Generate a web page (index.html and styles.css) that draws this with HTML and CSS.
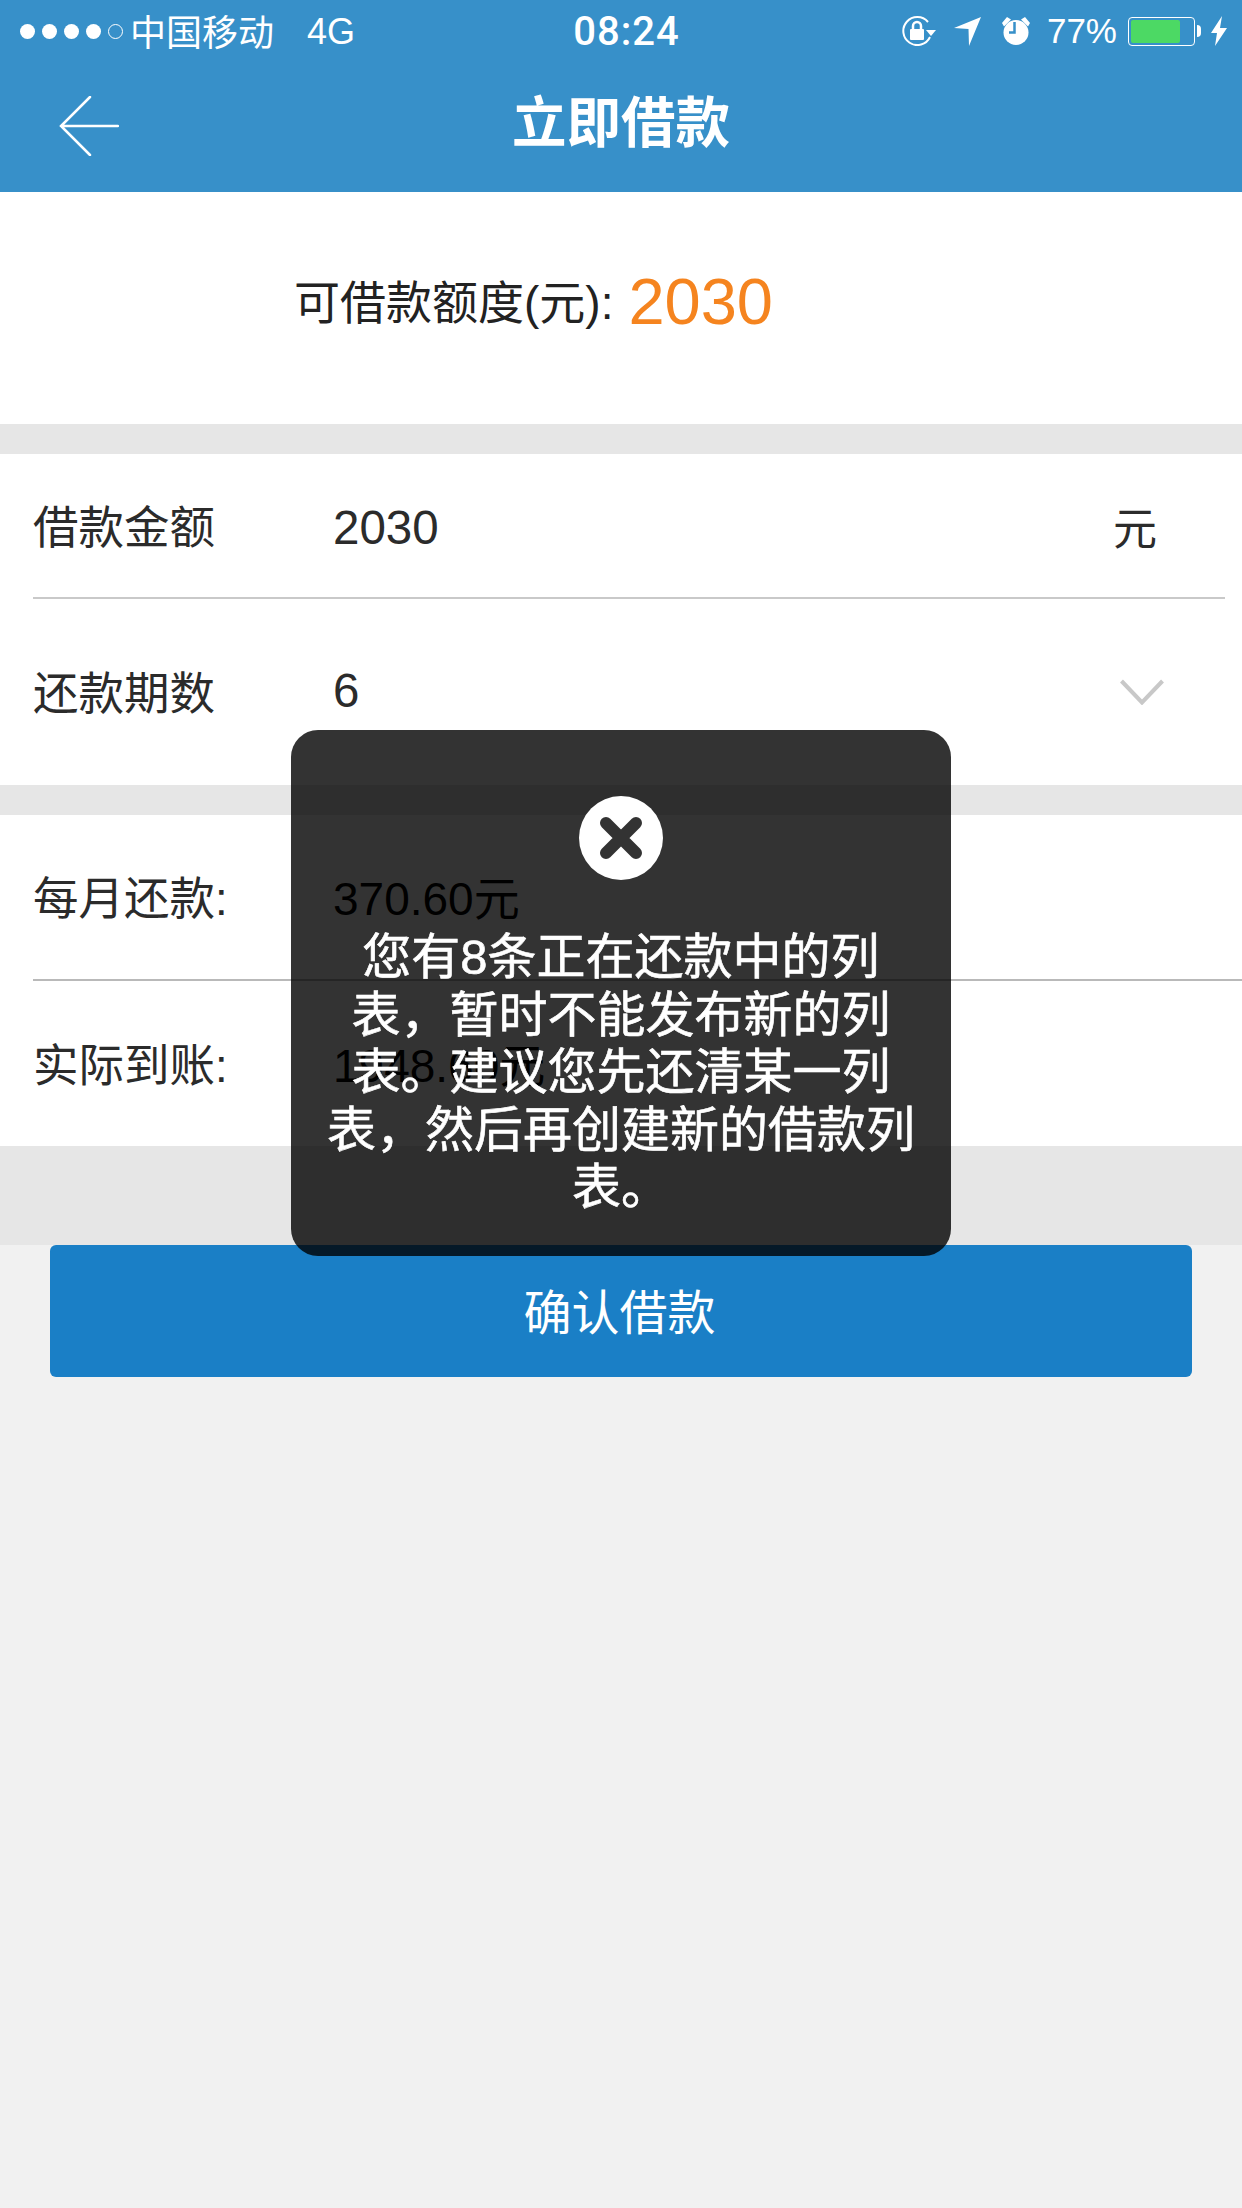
FILE: index.html
```html
<!DOCTYPE html>
<html lang="zh">
<head>
<meta charset="utf-8">
<title>立即借款</title>
<link rel="stylesheet" href="styles.css">
</head>
<body>
<div class="app">
  <header class="header">
    <div class="status">
      <div class="status-left">
        <span class="signal"><i></i><i></i><i></i><i></i><i class="off"></i></span>
        <span class="carrier">中国移动</span>
        <span class="net">4G</span>
      </div>
      <div class="time">08:24</div>
      <div class="status-right">
        <svg class="i-lock" viewBox="0 0 34 30" width="34" height="30"><path d="M26 6A14 14 0 1 0 28 21" fill="none" stroke="#fff" stroke-width="2"/><path d="M24 14h10l-5 6z" fill="#fff"/><rect x="8" y="13" width="14" height="11" rx="1" fill="#fff"/><path d="M11 13V10a4 4 0 0 1 8 0v3" fill="none" stroke="#fff" stroke-width="2.500"/></svg>
        <svg class="i-loc" viewBox="0 0 27 29" width="27" height="29"><path d="M0 11L27 0 15 29 14.500 12z" fill="#fff"/></svg>
        <svg class="i-alarm" viewBox="0 0 30 28" width="30" height="28"><circle cx="15" cy="15.500" r="12.500" fill="#fff"/><path d="M1 6L6 0l4 2.500-7 7zM29 6l-5-6-4 2.500 7 7z" fill="#fff"/><path d="M13.500 5v10.500H8" fill="none" stroke="#3790c9" stroke-width="2.500"/></svg>
        <span class="pct">77%</span>
        <span class="battery"><span class="battery-fill"></span></span>
        <span class="nub"></span>
        <svg class="i-bolt" viewBox="0 0 16 30" width="16" height="30"><path d="M11 0L0 17h6L4 30 16 12H9z" fill="#fff"/></svg>
      </div>
    </div>
    <div class="nav">
      <svg class="back" viewBox="0 0 60 60" width="60" height="60"><path d="M31 1L2 30l29 29M2 30h57" fill="none" stroke="#fff" stroke-width="2.500" stroke-linecap="round"/></svg>
      <h1 class="title">立即借款</h1>
    </div>
  </header>

  <section class="quota">
    <span class="quota-label">可借款额度(元):</span>
    <span class="quota-value">2030</span>
  </section>

  <section class="group group-a">
    <div class="row row-amount">
      <span class="label">借款金额</span>
      <span class="value">2030</span>
      <span class="unit">元</span>
    </div>
    <div class="row row-term">
      <span class="label">还款期数</span>
      <span class="value">6</span>
      <svg class="chev" viewBox="0 0 44 26" width="44" height="26"><path d="M1.500 2L22 23.500 42.500 2" fill="none" stroke="#c8c8c8" stroke-width="4"/></svg>
    </div>
  </section>

  <section class="group group-b">
    <div class="row row-sum">
      <span class="label">每月还款:</span>
      <span class="value dark">370.60元</span>
    </div>
    <div class="row row-sum last">
      <span class="label">实际到账:</span>
      <span class="value dark">1948.60元</span>
    </div>
  </section>

  <button class="confirm" type="button">确认借款</button>

  <div class="toast">
    <span class="close"><svg viewBox="0 0 44 44" width="44" height="44"><path d="M7 7l30 30M37 7L7 37" fill="none" stroke="#333" stroke-width="12" stroke-linecap="round"/></svg></span>
    <p class="toast-text">您有8条正在还款中的列表，暂时不能发布新的列表。建议您先还清某一列表，然后再创建新的借款列表。</p>
  </div>
</div>
</body>
</html>
```

FILE: styles.css
```css
* { box-sizing: border-box; }
html, body { margin: 0; padding: 0; }
body {
  width: 1242px;
  height: 2208px;
  overflow: hidden;
  background: #f1f1f1;
  font-family: "Liberation Sans", "Noto Sans CJK SC", sans-serif;
  color: #2b2b2b;
}
.app { position: relative; width: 1242px; height: 2208px; background: #f1f1f1; }

.header { height: 192px; background: #3790c9; color: #fff; }
.status {
  height: 60px;
  padding: 2px 15px 0 20px;
  display: grid;
  grid-template-columns: 1fr auto 1fr;
  align-items: center;
}
.status-left { display: flex; align-items: center; }
.signal { display: flex; gap: 7px; margin-right: 7px; }
.signal i { width: 15px; height: 15px; border-radius: 50%; background: #fff; }
.signal i.off { background: none; border: 1.500px solid #fff; }
.carrier { font-size: 36px; padding-bottom: 3px; }
.net { font-size: 36px; margin-left: 33px; padding-top: 1px; }
.time { font-family: Roboto, "Liberation Sans", sans-serif; font-size: 40px; font-weight: 500; letter-spacing: 1px; margin-left: 6px; }
.status-right { display: flex; align-items: center; justify-content: flex-end; }
.i-lock { margin-right: 18px; }
.i-loc { margin-right: 20px; }
.i-alarm { margin-right: 16px; }
.pct { font-size: 35px; margin-right: 11px; }
.battery { width: 67px; height: 29px; border: 1.500px solid #fff; border-radius: 4px; padding: 2px; display: block; }
.battery-fill { display: block; width: 49px; height: 100%; background: #4cd964; border-radius: 2px; }
.nub { width: 4px; height: 12px; background: #fff; margin: 0 10px 0 2px; border-radius: 0 4px 4px 0; }

.nav { height: 132px; display: flex; align-items: center; justify-content: center; position: relative; }
.back { position: absolute; left: 59px; top: 36px; }
.title { margin: 0 0 4px; font-size: 54.500px; font-weight: 700; line-height: 1; }

.quota {
  height: 232px;
  background: #fff;
  display: flex;
  align-items: center;
  padding-left: 294px;
  padding-bottom: 15px;
}
.quota-label { font-size: 46px; color: #222; padding-bottom: 3px; }
.quota-value { font-size: 65px; color: #f5841f; margin-left: 15px; padding-top: 2px; }

.group { background: #fff; border-top: 30px solid #e6e6e6; }
.group-a { padding-left: 33px; padding-right: 17px; }
.group-b { padding-left: 33px; border-bottom: 99px solid #e6e6e6; }
.row { display: flex; align-items: center; }
.row-amount { height: 145px; border-bottom: 2px solid #c9c9c9; }
.row-term { height: 186px; }
.row-sum { height: 166px; border-bottom: 2px solid #b9b9b9; }
.row-sum.last { height: 165px; border-bottom: 0; }
.label { width: 300px; font-size: 45.500px; color: #2b2b2b; padding-bottom: 4px; }
.value { flex: 1; font-size: 47.500px; color: #2b2b2b; }
.row-amount .value { padding-top: 3px; }
.row-term .value { padding-bottom: 4px; }
.value.dark { color: #000; font-size: 46px; padding-bottom: 4px; }
.unit { font-size: 44px; color: #2b2b2b; margin-right: 68px; }
.chev { margin-right: 61px; }

.confirm {
  display: block;
  width: 1142px;
  height: 132px;
  margin: 0 0 0 50px;
  padding: 0 3px 4px 0;
  border: 0;
  border-radius: 6px;
  background: #1a7fc6;
  color: #fff;
  font: 48px "Liberation Sans", "Noto Sans CJK SC", sans-serif;
}

.toast {
  position: absolute;
  left: 291px;
  top: 730px;
  width: 660px;
  height: 526px;
  border-radius: 27px;
  background: rgba(0, 0, 0, 0.8);
  display: flex;
  flex-direction: column;
  align-items: center;
  padding: 66px 30px 0;
  color: #fff;
}
.close {
  width: 84px;
  height: 84px;
  border-radius: 50%;
  background: #fff;
  display: flex;
  align-items: center;
  justify-content: center;
  flex: none;
}
.toast-text {
  margin: 49px 0 0;
  width: 592px;
  font-size: 49px;
  line-height: 57.600px;
  text-align: center;
  color: #fff;
  -webkit-text-stroke: 0.6px #fff;
}
```
